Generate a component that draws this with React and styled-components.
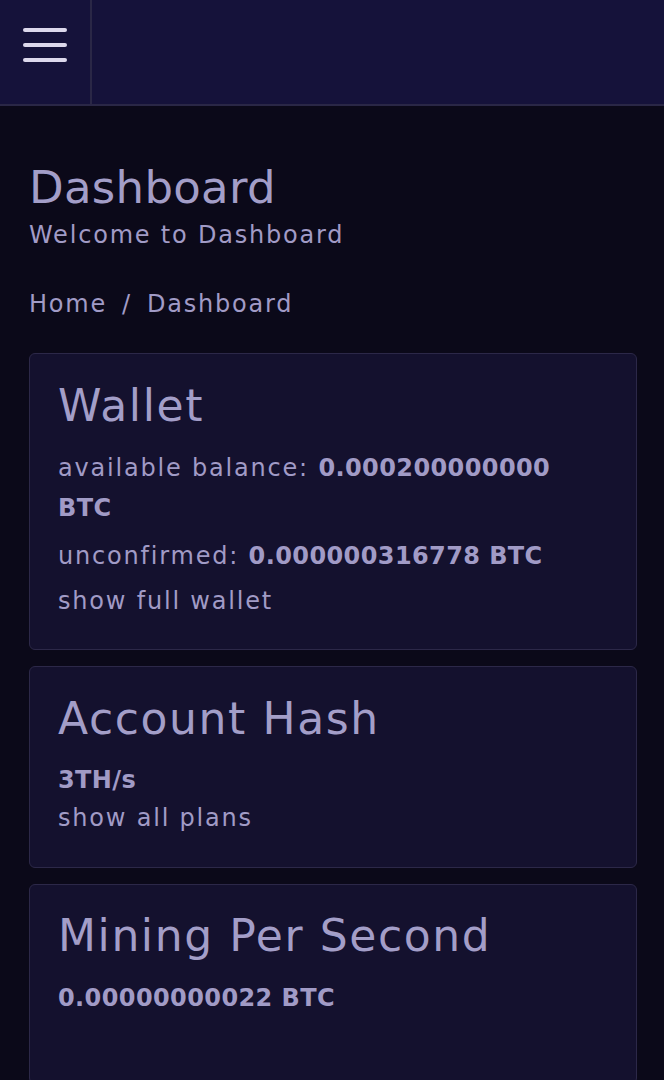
import React from "react";
import styled, { createGlobalStyle } from "styled-components";

const Global = createGlobalStyle`
  html, body { margin: 0; padding: 0; background: #0b0919; }
  body { font-family: "DejaVu Sans", "Open Sans", sans-serif; color: #a19bc6; }
`;

const Page = styled.div`
  min-height: 1080px;
  background: #0b0919;
`;

const TopBar = styled.header`
  display: flex;
  height: 104px;
  background: #15123a;
  border-bottom: 2px solid #2a2746;
`;

const MenuButton = styled.button`
  width: 92px;
  height: 100%;
  border: none;
  border-right: 2px solid #2a2746;
  background: transparent;
  display: flex;
  flex-direction: column;
  justify-content: flex-start;
  align-items: flex-start;
  gap: 11px;
  padding: 28px 0 0 23px;
`;

const Bar = styled.span`
  display: block;
  width: 44px;
  height: 4px;
  border-radius: 2px;
  background: #dcd8ec;
`;

const Main = styled.main`
  padding: 56px 27px 0 29px;
`;

const Title = styled.h1`
  margin: 0;
  font-size: 45px;
  font-weight: 400;
  line-height: 52px;
  letter-spacing: 0.3px;
  color: #a39ec8;
`;

const Subtitle = styled.p`
  margin: 6px 0 0;
  font-size: 24px;
  line-height: 30px;
  letter-spacing: 1.8px;
  color: #a19bc6;
`;

const Crumbs = styled.nav`
  display: flex;
  gap: 15px;
  margin-top: 39px;
  font-size: 24px;
  line-height: 30px;
  letter-spacing: 1.8px;
  color: #a19bc6;
`;

const Cards = styled.div`
  display: flex;
  flex-direction: column;
  gap: 16px;
  margin-top: 34px;
`;

const Card = styled.section`
  min-height: ${(p) => p.$h}px;
  box-sizing: border-box;
  background: #14112e;
  border: 1px solid #2c2848;
  border-radius: 6px;
  padding: ${(p) => p.$pt || 26}px 44px 20px 28px;
`;

const CardTitle = styled.h2`
  margin: 0 0 16px;
  font-size: 44px;
  font-weight: 400;
  line-height: 52px;
  letter-spacing: 1.6px;
  color: #a39ec8;
`;

const Line = styled.p`
  margin: ${(p) => p.$mt || 0}px 0 0;
  font-size: 24px;
  line-height: ${(p) => p.$lh || 40}px;
  letter-spacing: 1.8px;
  color: #a19bc6;
`;

const Strong = styled.b`
  font-weight: 700;
  letter-spacing: 0.4px;
`;

export default function App() {
  return (
    <Page>
      <Global />
      <TopBar>
        <MenuButton aria-label="menu">
          <Bar />
          <Bar />
          <Bar />
        </MenuButton>
      </TopBar>
      <Main>
        <Title>Dashboard</Title>
        <Subtitle>Welcome to Dashboard</Subtitle>
        <Crumbs>
          <span>Home</span>
          <span>/</span>
          <span>Dashboard</span>
        </Crumbs>
        <Cards>
          <Card $h={297}>
            <CardTitle>Wallet</CardTitle>
            <Line>
              available balance: <Strong>0.000200000000</Strong>{" "}
              <Strong>BTC</Strong>
            </Line>
            <Line $mt={8}>
              unconfirmed: <Strong>0.000000316778 BTC</Strong>
            </Line>
            <Line $mt={5}>show full wallet</Line>
          </Card>
          <Card $h={202}>
            <CardTitle>Account Hash</CardTitle>
            <Line $lh={38}>
              <Strong>3TH/s</Strong>
            </Line>
            <Line $lh={38}>show all plans</Line>
          </Card>
          <Card $h={200} $pt={25}>
            <CardTitle>Mining Per Second</CardTitle>
            <Line>
              <Strong>0.00000000022 BTC</Strong>
            </Line>
          </Card>
        </Cards>
      </Main>
    </Page>
  );
}
